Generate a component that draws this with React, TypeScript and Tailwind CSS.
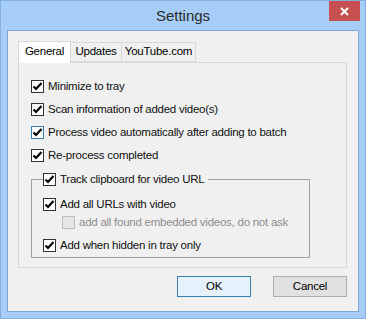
import React from "react";

type BoxProps = { checked?: boolean; disabled?: boolean; hover?: boolean };

function Box({ checked = false, disabled = false, hover = false }: BoxProps) {
  const border = disabled ? "border-[#bcbcbc] bg-[#e6e6e6]" : hover ? "border-[#3c7fb1] bg-white" : "border-[#333333] bg-white";
  return (
    <span className={`flex h-[13px] w-[13px] shrink-0 items-center justify-center border ${border}`}>
      {checked && (
        <svg width="11" height="11" viewBox="0 0 11 11">
          <path d="M1.5 5.5 L4 8 L9.5 2" fill="none" stroke="#000" strokeWidth="2.2" />
        </svg>
      )}
    </span>
  );
}

function Check({ label, checked = true, disabled = false, hover = false }: { label: string } & BoxProps) {
  return (
    <div className="flex items-center gap-[4px]">
      <Box checked={checked} disabled={disabled} hover={hover} />
      <span className={disabled ? "text-[#8d8d8d]" : "text-[#111]"}>{label}</span>
    </div>
  );
}

export default function App() {
  return (
    <div
      className="flex h-[319px] w-[366px] flex-col border border-[#83afe0] bg-[#a5cdf7] text-[11.5px] leading-none tracking-[-0.25px]"
      style={{ fontFamily: '"Segoe UI", "Liberation Sans", Arial, sans-serif' }}
    >
      {/* title bar */}
      <div className="grid h-[29px] grid-cols-[1fr_auto_1fr] items-start">
        <div />
        <div className="pt-[7px] text-[15px] tracking-normal text-[#2b2b2b]">Settings</div>
        <div className="flex justify-end pr-[5px]">
          <div className="flex h-[20px] w-[31px] items-center justify-center bg-[#c75050]">
            <svg width="9" height="9" viewBox="0 0 9 9">
              <path d="M1 1 L8 8 M8 1 L1 8" stroke="#fff" strokeWidth="2" />
            </svg>
          </div>
        </div>
      </div>

      {/* client area */}
      <div className="mx-[6px] flex h-[282px] flex-col border border-[#7ea6cf] bg-[#f0f0f0]">
        <div className="ml-[10px] mt-[10px] w-[329px]">
          {/* tabs */}
          <div className="flex h-[21px] items-end">
            <div className="relative z-10 -mb-px flex h-[22px] w-[53px] items-center justify-center border border-b-0 border-[#d9d9d9] bg-white pb-[2px]">
              General
            </div>
            <div className="flex h-[20px] w-[51px] items-center justify-center border border-l-0 border-[#d9d9d9] bg-[#f0f0f0]">
              Updates
            </div>
            <div className="flex h-[20px] w-[74px] items-center justify-center border border-l-0 border-[#d9d9d9] bg-[#f0f0f0]">
              YouTube.com
            </div>
          </div>
          {/* panel */}
          <div className="h-[206px] border border-[#d9d9d9] bg-[#f0f0f0] pl-[12px] pt-[17px]">
            <div className="flex flex-col gap-[10px]">
              <Check label="Minimize to tray" />
              <Check label="Scan information of added video(s)" />
              <Check label="Process video automatically after adding to batch" hover />
              <Check label="Re-process completed" />
            </div>
            <div className="relative mt-[17px] h-[79px] w-[279px] border border-[#a0a0a0]">
              <div className="absolute -top-[7px] left-[11px] bg-[#f0f0f0] pr-[4px]">
                <Check label="Track clipboard for video URL" />
              </div>
              <div className="flex flex-col pl-[11px] pt-[18px]">
                <Check label="Add all URLs with  video" />
                <div className="ml-[19px] mt-[5px]">
                  <Check label="add all found embedded videos, do not ask" checked={false} disabled />
                </div>
                <div className="mt-[10px]">
                  <Check label="Add when hidden in tray only" />
                </div>
              </div>
            </div>
          </div>
        </div>
        {/* buttons */}
        <div className="ml-[169px] mt-[8px] flex gap-[22px]">
          <div className="flex h-[21px] w-[74px] items-center justify-center border border-[#3c7fb1] bg-[#e5f1fb]">OK</div>
          <div className="flex h-[21px] w-[74px] items-center justify-center border border-[#adadad] bg-[#e1e1e1]">Cancel</div>
        </div>
      </div>
    </div>
  );
}
